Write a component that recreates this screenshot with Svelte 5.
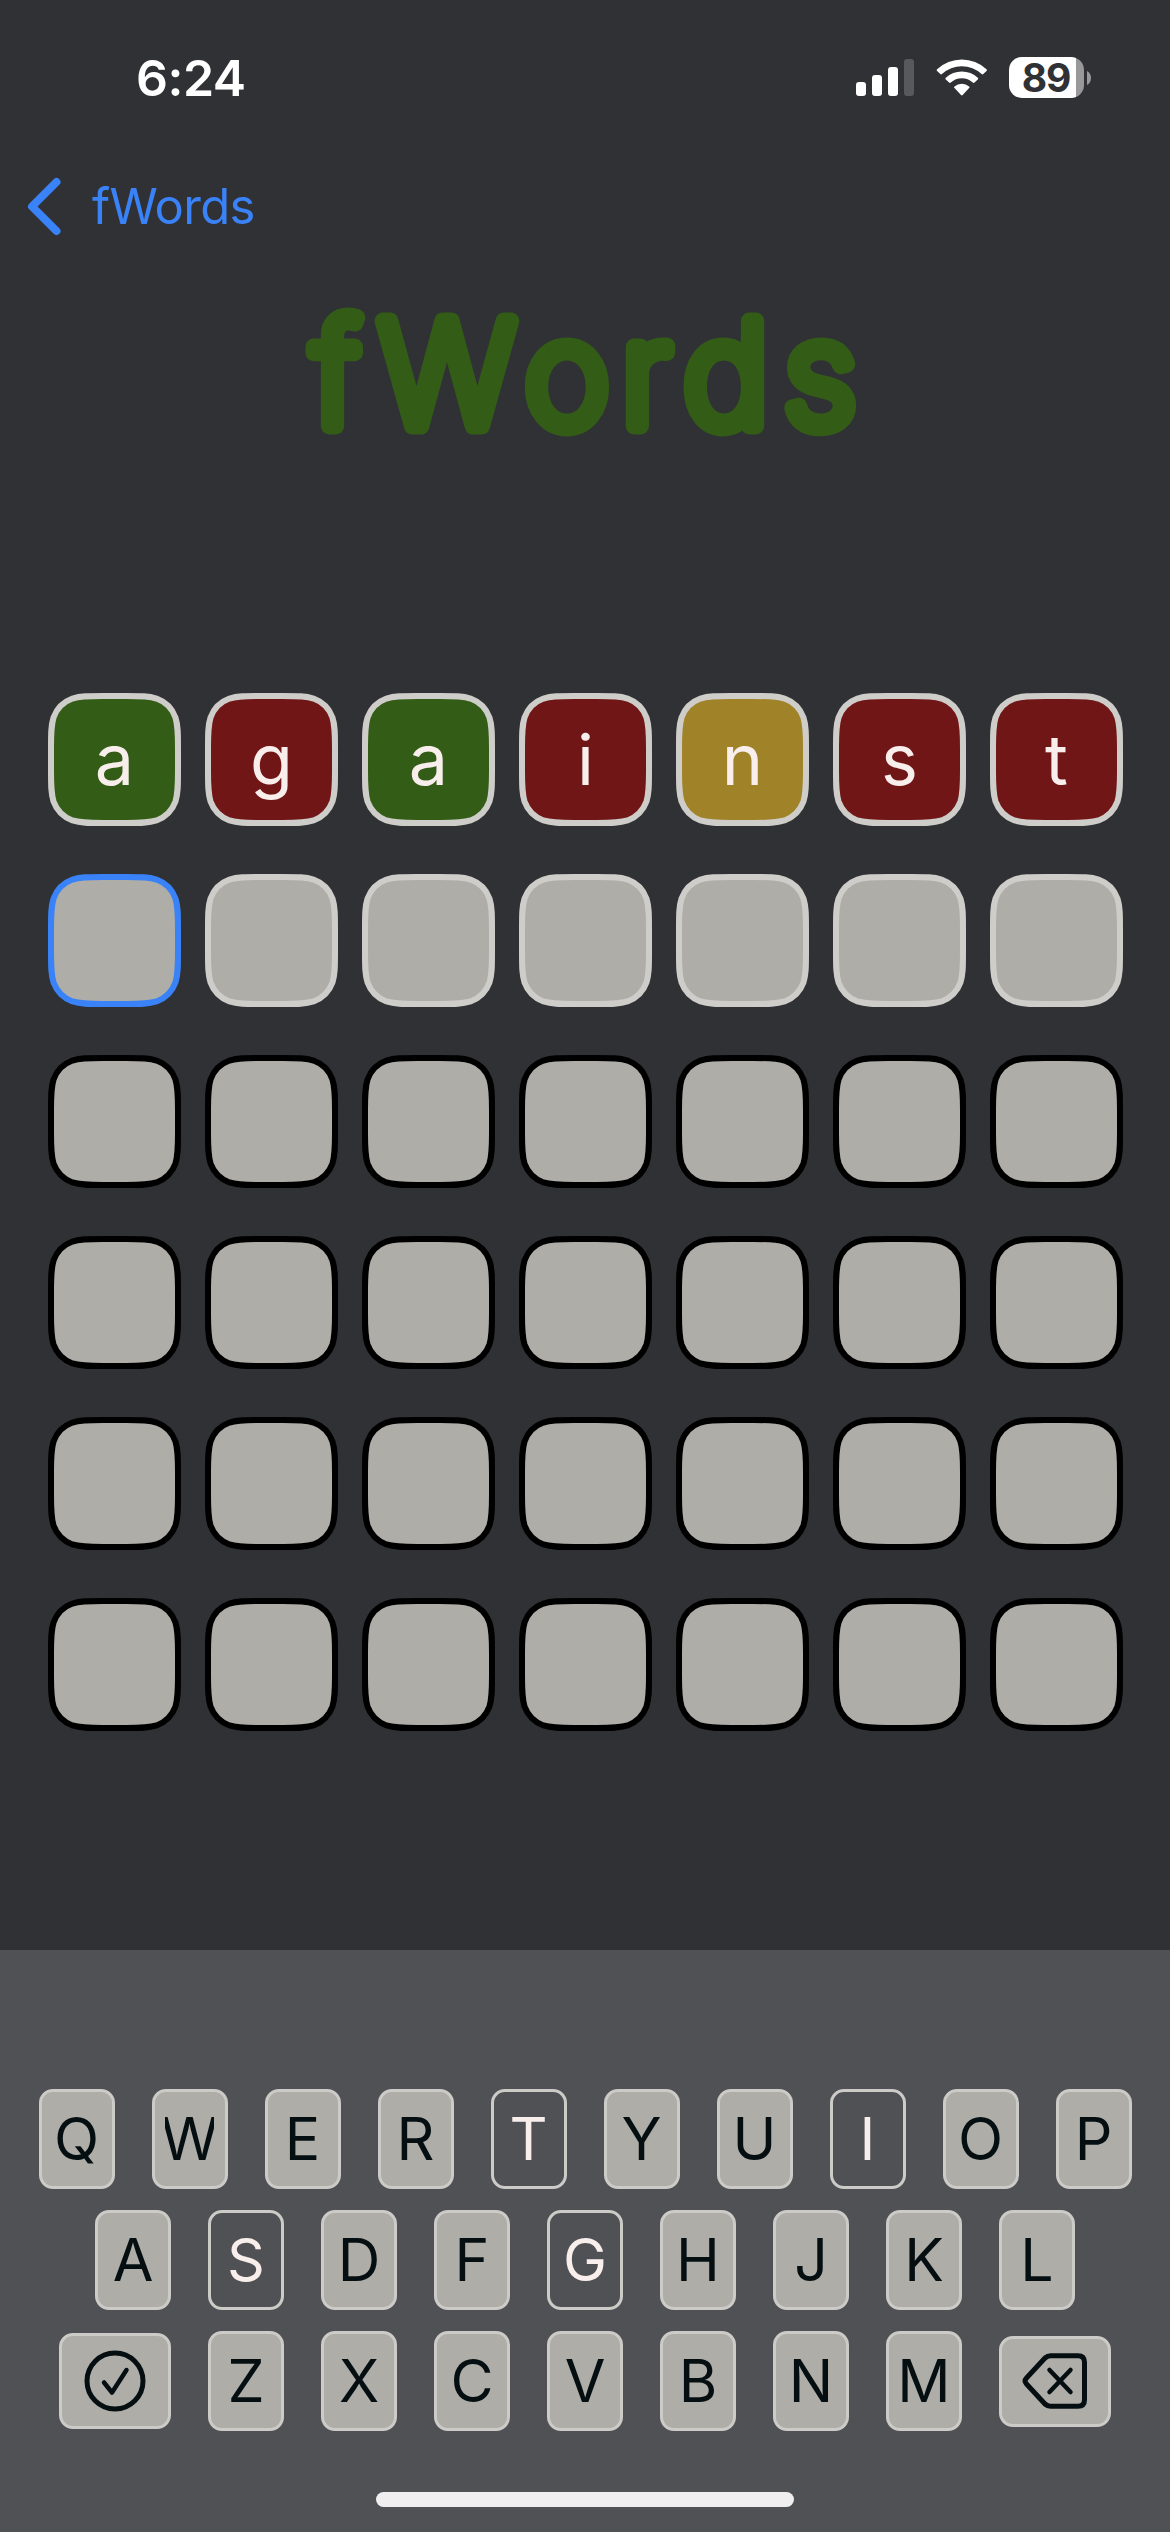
<script>
  const SIZE = 133;

  // Closed outline of a square with continuous-curvature corners
  function squircle(inset, r) {
    const a = inset;
    const b = SIZE - inset;
    const k = [1.528665, 1.088493, 0.868407, 0.631494, 0.372824, 0.16906, 0.074911].map((v) => v * r);
    const [e, c1, c2, m, n, o, p] = k;
    return [
      `M${a + e} ${a}H${b - e}`,
      `C${b - c1} ${a} ${b - c2} ${a} ${b - m} ${a + p}`,
      `C${b - n} ${a + o} ${b - o} ${a + n} ${b - p} ${a + m}`,
      `C${b} ${a + c2} ${b} ${a + c1} ${b} ${a + e}V${b - e}`,
      `C${b} ${b - c1} ${b} ${b - c2} ${b - p} ${b - m}`,
      `C${b - o} ${b - n} ${b - n} ${b - o} ${b - m} ${b - p}`,
      `C${b - c2} ${b} ${b - c1} ${b} ${b - e} ${b}H${a + e}`,
      `C${a + c1} ${b} ${a + c2} ${b} ${a + m} ${b - p}`,
      `C${a + n} ${b - o} ${a + o} ${b - n} ${a + p} ${b - m}`,
      `C${a} ${b - c2} ${a} ${b - c1} ${a} ${b - e}V${a + e}`,
      `C${a} ${a + c1} ${a} ${a + c2} ${a + p} ${a + m}`,
      `C${a + o} ${a + n} ${a + n} ${a + o} ${a + m} ${a + p}`,
      `C${a + c2} ${a} ${a + c1} ${a} ${a + e} ${a}Z`
    ].join('');
  }
  const tilePath = squircle(3, 34);

  const marks = ['hit', 'miss', 'hit', 'miss', 'near', 'miss', 'miss'];
  const board = [
    [...'against'].map((letter, i) => ({ letter, kind: marks[i] })),
    Array.from({ length: 7 }, (_, i) => ({ letter: '', kind: i === 0 ? 'cursor' : 'open' })),
    ...Array.from({ length: 4 }, () => Array.from({ length: 7 }, () => ({ letter: '', kind: 'locked' })))
  ];

  const used = new Set('TISG');
  const topKeys = [...'QWERTYUIOP'];
  const homeKeys = [...'ASDFGHJKL'];
  const bottomKeys = [...'ZXCVBNM'];
</script>

{#snippet key(letter)}
  <button class="key" class:used={used.has(letter)}>
    <span class:wide={letter === 'W'}>{letter}</span>
  </button>
{/snippet}

<div class="screen">
  <header class="status">
    <span class="time">6:24</span>
    <div class="indicators">
      <svg class="signal" width="58" height="38" viewBox="0 0 58 38">
        <rect x="0" y="24" width="10" height="14" rx="3" />
        <rect x="16" y="17" width="10" height="21" rx="3" />
        <rect x="32" y="9" width="10" height="29" rx="3" />
        <rect class="dim" x="48" y="1" width="10" height="37" rx="3" />
      </svg>
      <svg class="wifi" width="52" height="38" viewBox="0 0 52 38">
        <path d="M1.1 11.2a36 36 0 0 1 49.4 0c.6.6.6 1.1 0 1.7l-3.2 3.2c-.5.5-1.1.5-1.7 0a29 29 0 0 0-39.6 0c-.6.5-1.2.5-1.7 0L1.1 12.9c-.6-.6-.6-1.1 0-1.7z" />
        <path d="M9.8 19.7a23.5 23.5 0 0 1 32 0c.6.6.6 1.1 0 1.7l-3.3 3.2c-.5.5-1.1.5-1.7 0a16.2 16.2 0 0 0-22 0c-.6.5-1.2.5-1.7 0l-3.3-3.2c-.6-.6-.6-1.1 0-1.7z" />
        <path d="M18.5 28.4a11 11 0 0 1 14.6 0c.6.6.6 1.1 0 1.7l-6.4 6.9c-.6.6-1.1.6-1.7 0l-6.5-6.9c-.6-.6-.6-1.1 0-1.7z" />
      </svg>
      <div class="battery">
        <div class="cell"><span>89</span></div>
        <svg width="4" height="14" viewBox="0 0 4 14"><path d="M0 0C2 1 4 3.5 4 7S2 13 0 14z" /></svg>
      </div>
    </div>
  </header>

  <nav class="nav">
    <svg width="36" height="60" viewBox="0 0 36 60">
      <path d="M31.5 5L7 29.5L31.5 54" />
    </svg>
    <span>fWords</span>
  </nav>

  <h1 class="title">
    <svg width="600" height="220" viewBox="0 -30 600 220">
      <text y="128" x="51 162 282 361 441 535">fWords</text>
    </svg>
  </h1>

  <main class="board">
    {#each board as row}
      {#each row as tile}
        <div class="tile {tile.kind}">
          <svg width="133" height="133" viewBox="0 0 133 133"><path d={tilePath} /></svg>
          <span>{tile.letter}</span>
        </div>
      {/each}
    {/each}
  </main>

  <section class="keyboard">
    <div class="keys">
      {#each topKeys as letter}{@render key(letter)}{/each}
    </div>
    <div class="keys">
      {#each homeKeys as letter}{@render key(letter)}{/each}
    </div>
    <div class="keys">
      <button class="key submit" aria-label="Submit">
        <svg width="62" height="62" viewBox="0 0 62 62">
          <circle cx="31" cy="31" r="28" />
          <path class="tick" d="M20 32.5L28 42.5L42.5 20" />
        </svg>
      </button>
      {#each bottomKeys as letter}{@render key(letter)}{/each}
      <button class="key delete" aria-label="Delete">
        <svg width="66" height="56" viewBox="0 0 66 56">
          <path d="M28.5 2.8H56Q62.5 2.8 62.5 9.3V46.7Q62.5 53.2 56 53.2H28.5Q25.5 53.2 23 51L4.5 31Q1.7 28 4.5 25L23 5Q25.5 2.8 28.5 2.8Z" />
          <path class="tick" d="M27.5 17L48.5 39M48.5 17L27.5 39" />
        </svg>
      </button>
    </div>
    <div class="home-bar"></div>
  </section>
</div>

<style>
  :global(body) {
    background: #303135;
  }

  .screen {
    width: 1170px;
    height: 2532px;
    display: flex;
    flex-direction: column;
    overflow: hidden;
    background: #303135;
    font-family: Inter, 'Liberation Sans', sans-serif;
  }

  .status {
    height: 156px;
    box-sizing: border-box;
    padding: 48px 79px 0 136px;
    display: flex;
    justify-content: space-between;
    align-items: flex-start;
    color: #fff;
  }
  .time {
    font-size: 50px;
    font-weight: 600;
    line-height: 60px;
    letter-spacing: -0.5px;
  }
  .indicators {
    display: flex;
    padding-top: 9px;
    fill: #fff;
  }
  .signal {
    margin: 1px 22px 0 0;
  }
  .signal .dim {
    fill: #59595c;
  }
  .wifi {
    margin: 1px 21px 0 0;
  }
  .battery {
    display: flex;
    align-items: center;
    gap: 3px;
    height: 41px;
    fill: #98989b;
  }
  .cell {
    width: 75px;
    height: 41px;
    border-radius: 13px;
    background: linear-gradient(to right, #fff 67px, #98989b 67px);
    color: #303135;
    font-size: 39px;
    font-weight: 700;
    line-height: 41px;
    letter-spacing: -1px;
  }
  .cell span {
    display: block;
    width: 74px;
    text-align: center;
  }

  .nav {
    height: 104px;
    box-sizing: border-box;
    padding: 21px 0 0 25px;
    display: flex;
    gap: 31px;
    color: #3a82f7;
    font-size: 49px;
    line-height: 60px;
    letter-spacing: -0.7px;
  }
  .nav path {
    fill: none;
    stroke: #3a82f7;
    stroke-width: 8;
    stroke-linecap: round;
    stroke-linejoin: round;
  }

  .title {
    margin: 8px 0 0 285px;
    height: 425px;
  }
  .title svg {
    display: block;
  }
  .title text {
    font-size: 144px;
    font-weight: 200;
    text-anchor: middle;
    fill: #335c16;
    stroke: #335c16;
    stroke-width: 17;
    stroke-linejoin: round;
  }

  .board {
    height: 1257px;
    padding-left: 48px;
    display: grid;
    grid-template-columns: repeat(7, 133px);
    grid-auto-rows: 133px;
    gap: 48px 24px;
  }
  .tile {
    display: grid;
    place-items: center;
    color: #f8eeec;
    font-size: 70px;
    line-height: 84px;
  }
  .tile > * {
    grid-area: 1 / 1;
  }
  .tile path {
    fill: #aeada8;
    stroke: #cecdc9;
    stroke-width: 6;
  }
  .hit path {
    fill: #335c16;
  }
  .miss path {
    fill: #701617;
  }
  .near path {
    fill: #a08229;
  }
  .cursor path {
    stroke: #3a82f7;
  }
  .locked path {
    stroke: #000;
  }

  .keyboard {
    flex: 1;
    box-sizing: border-box;
    padding-top: 139px;
    display: flex;
    flex-direction: column;
    align-items: center;
    gap: 21px;
    background: #505155;
  }
  .keys {
    height: 100px;
    display: flex;
    align-items: center;
    gap: 37px;
  }
  .key {
    width: 76px;
    height: 100px;
    box-sizing: border-box;
    flex: none;
    padding: 0;
    display: flex;
    align-items: center;
    justify-content: center;
    border: 3px solid #cccbc7;
    border-radius: 14px;
    background: #aeada8;
    color: #050f12;
    font: 400 59px/72px Inter, 'Liberation Sans', sans-serif;
  }
  .key.used {
    background: transparent;
    color: #f8eeec;
  }
  .wide {
    clip-path: inset(0 calc(50% - 24.5px));
  }
  .submit {
    width: 112px;
    height: 96px;
  }
  .delete {
    width: 112px;
    height: 91px;
  }
  .key svg {
    fill: none;
    stroke: #050f12;
    stroke-width: 5;
    stroke-linejoin: round;
    stroke-linecap: round;
  }
  .key .tick {
    stroke-width: 4.5;
  }
  .home-bar {
    width: 418px;
    height: 15px;
    margin-top: 40px;
    border-radius: 8px;
    background: #f0eeee;
  }
</style>
